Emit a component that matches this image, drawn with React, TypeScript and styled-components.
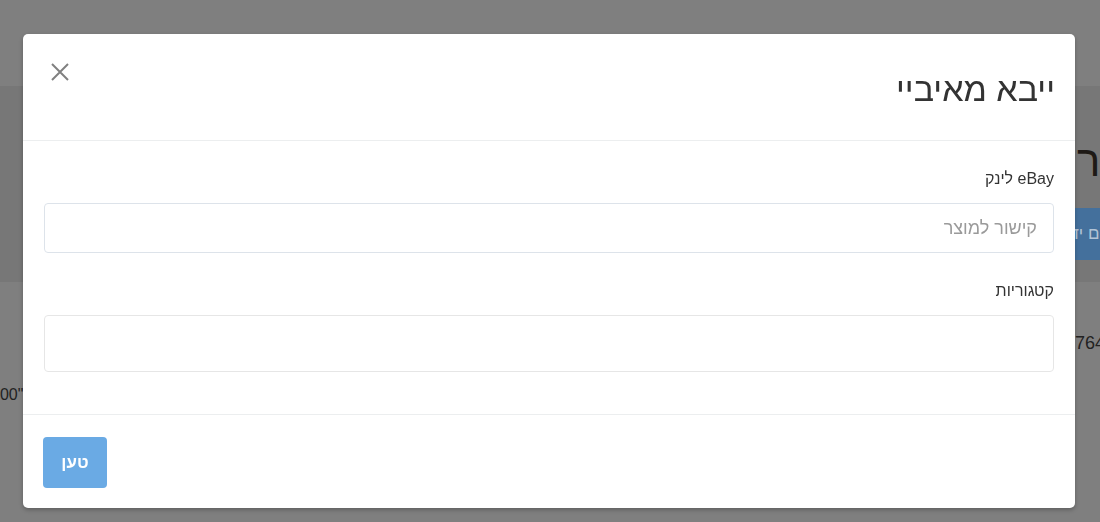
import React from 'react';
import styled, { createGlobalStyle } from 'styled-components';

const GlobalStyle = createGlobalStyle`
	html, body {
		margin: 0;
		padding: 0;
		height: 100%;
		overflow: hidden;
	}
	body {
		font-family: 'Liberation Sans', Arial, 'DejaVu Sans', sans-serif;
		color: #333;
		background: #7f7f7f;
	}
	* {
		box-sizing: border-box;
	}
`;

const Page = styled.div`
	width: 1100px;
	height: 522px;
	display: flex;
	flex-direction: column;
	background: #7f7f7f;
	overflow: hidden;
`;

const TopBar = styled.div`
	height: 86px;
	background: #7f7f7f;
`;

const Jumbo = styled.section`
	height: 196px;
	background: #777;
	display: flex;
	flex-direction: column;
	align-items: flex-start;
	padding: 50px 0 0 1077px;
	gap: 22px;
`;

const Heading = styled.span`
	font-size: 44px;
	line-height: 50px;
	color: #1e1a16;
	white-space: nowrap;
`;

const PageButton = styled.span`
	display: inline-flex;
	align-items: center;
	height: 52px;
	width: 200px;
	margin-left: -2px;
	background: #44709c;
	overflow: hidden;
`;

const PageButtonText = styled.span`
	margin-left: -28px;
	color: #b3c4d6;
	font-size: 17px;
	white-space: nowrap;
`;

const Rows = styled.div`
	flex: 1;
	display: flex;
	flex-direction: column;
	align-items: flex-start;
	padding-top: 50px;
	gap: 30px;
`;

const Cell = styled.span<{ side: 'left' | 'right' }>`
	font-size: 18px;
	line-height: 22px;
	color: #222;
	white-space: nowrap;
	${(p) => (p.side === 'right' ? 'margin-left: 1075px;' : 'margin-left: -9px; font-size: 16px;')}
`;

const Backdrop = styled.div`
	position: fixed;
	inset: 0;
	padding: 34px 25px 14px 23px;
	display: flex;
	direction: rtl;
`;

const Modal = styled.div`
	flex: 1;
	display: flex;
	flex-direction: column;
	background: #fff;
	border-radius: 5px;
	box-shadow: 0 2px 4px rgba(0, 0, 0, 0.25);
	overflow: hidden;
`;

const Header = styled.div`
	height: 107px;
	display: flex;
	align-items: center;
	justify-content: space-between;
	padding: 0 20px 0 27px;
	border-bottom: 1px solid #eceeef;
`;

const Title = styled.h4`
	margin: 4px 0 0;
	font-size: 34px;
	font-weight: normal;
	color: #333;
`;

const Close = styled.button`
	border: 0;
	background: none;
	padding: 0;
	margin-bottom: 30px;
	cursor: pointer;
	display: flex;
`;

const Body = styled.div`
	flex: 1;
	padding: 27px 21px 0 21px;
	border-bottom: 1px solid #eceeef;
`;

const Group = styled.div`
	margin-bottom: 27px;
`;

const Label = styled.label`
	display: block;
	font-size: 16px;
	line-height: 22px;
	color: #333;
	margin-bottom: 13px;
`;

const Input = styled.input<{ tall?: boolean }>`
	display: block;
	width: 100%;
	height: ${(p) => (p.tall ? '57px' : '50px')};
	padding: 0 16px;
	border: 1px solid ${(p) => (p.tall ? '#e6e6e6' : '#dde3ea')};
	border-radius: 4px;
	font-family: inherit;
	font-size: 18px;
	color: #333;
	direction: rtl;
	&::placeholder {
		color: #9a9a9a;
	}
`;

const Footer = styled.div`
	height: 93px;
	display: flex;
	align-items: center;
	justify-content: flex-end;
	padding: 0 20px;
`;

const Submit = styled.button`
	width: 64px;
	height: 51px;
	margin-top: 2px;
	border: 0;
	border-radius: 4px;
	background: #6aaae4;
	color: #fff;
	font-family: inherit;
	font-size: 17px;
	font-weight: bold;
	cursor: pointer;
`;

const App = () => (
	<>
		<GlobalStyle />
		<Page>
			<TopBar />
			<Jumbo>
				<Heading dir="rtl">מוצר</Heading>
				<PageButton>
					<PageButtonText dir="rtl">הוספת מוצרים ידנית</PageButtonText>
				</PageButton>
			</Jumbo>
			<Rows>
				<Cell side="right">76450</Cell>
				<Cell side="left">100"</Cell>
			</Rows>
		</Page>
		<Backdrop>
			<Modal>
				<Header>
					<Title>ייבא מאיביי</Title>
					<Close aria-label="סגור">
						<svg width="20" height="20" viewBox="0 0 20 20">
							<path d="M2 2 L18 18 M18 2 L2 18" stroke="#808080" strokeWidth="2" fill="none" />
						</svg>
					</Close>
				</Header>
				<Body>
					<Group>
						<Label>eBay לינק</Label>
						<Input placeholder="קישור למוצר" />
					</Group>
					<Group>
						<Label>קטגוריות</Label>
						<Input tall />
					</Group>
				</Body>
				<Footer>
					<Submit>טען</Submit>
				</Footer>
			</Modal>
		</Backdrop>
	</>
);

export default App;
